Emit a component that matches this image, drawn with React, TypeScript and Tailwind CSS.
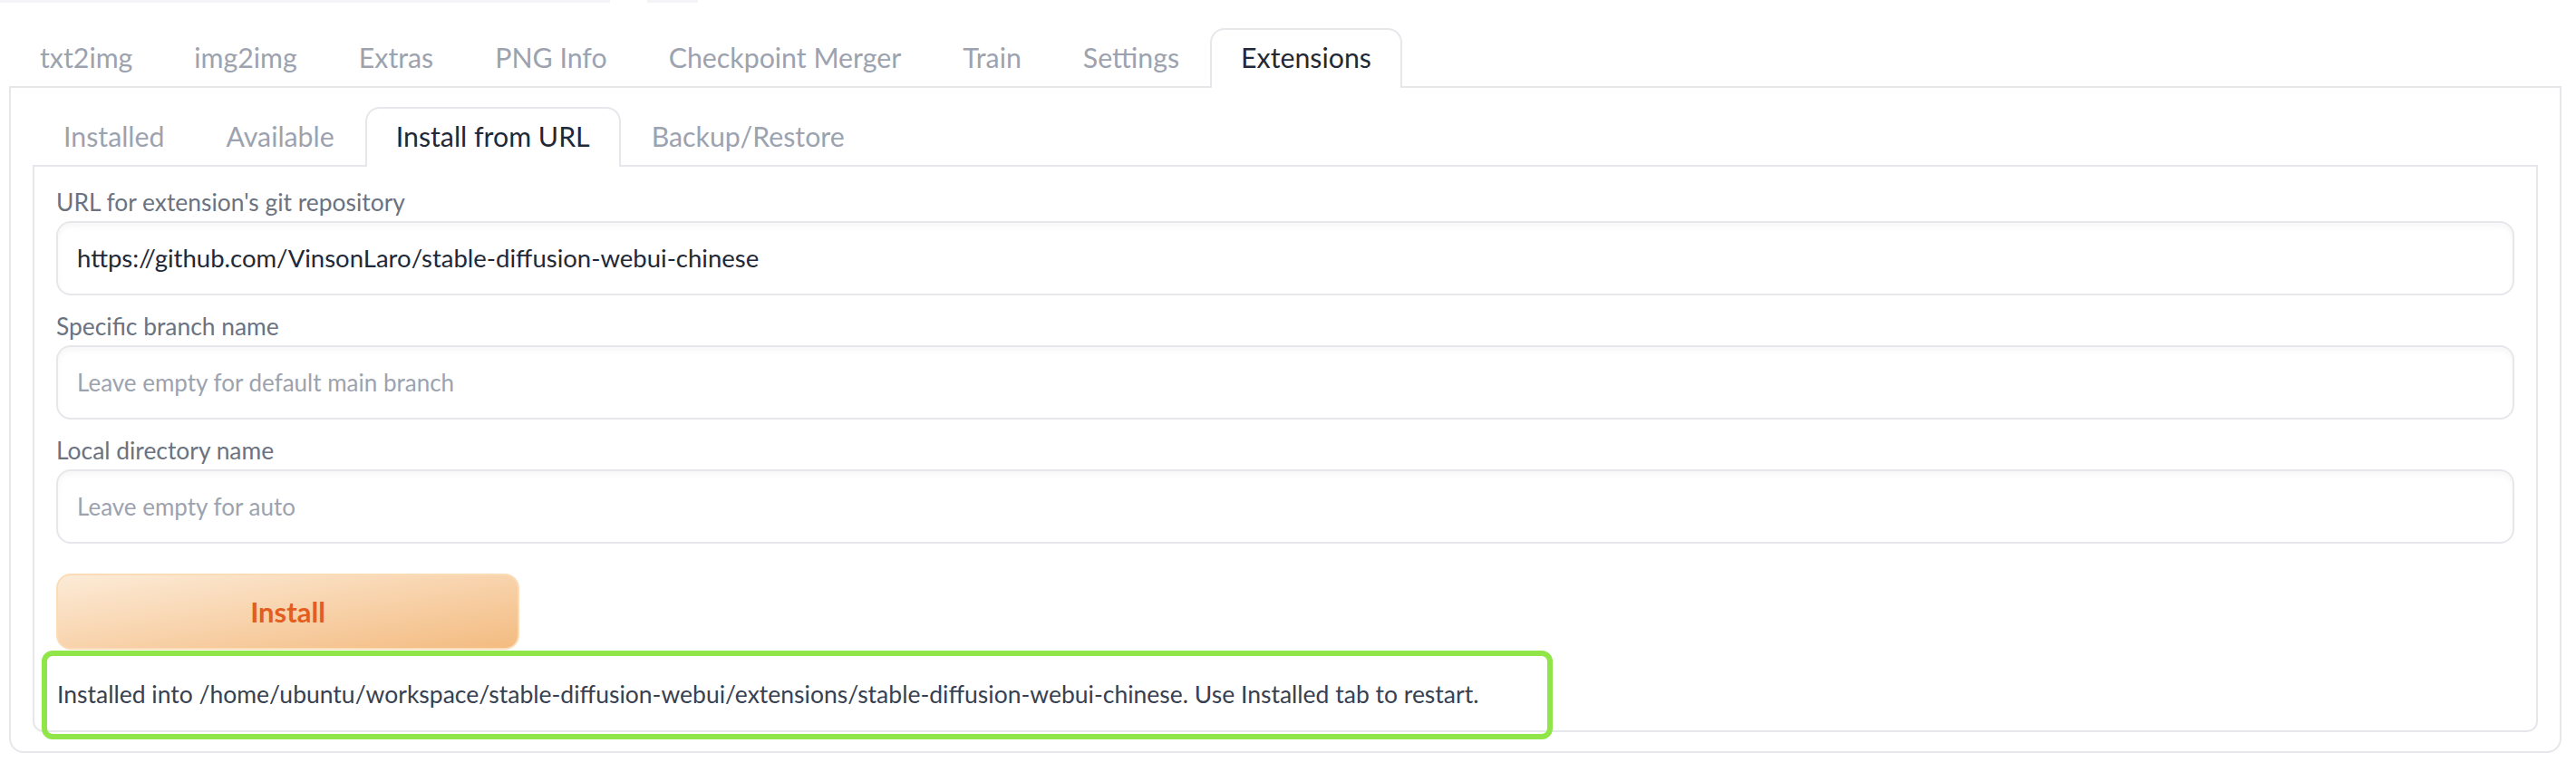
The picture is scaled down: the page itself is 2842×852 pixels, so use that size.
import React from 'react';

const topTabs = ['txt2img', 'img2img', 'Extras', 'PNG Info', 'Checkpoint Merger', 'Train', 'Settings', 'Extensions'];
const subTabs = ['Installed', 'Available', 'Install from URL', 'Backup/Restore'];

function TabNav({ tabs, active }: { tabs: string[]; active: string }) {
  return (
    <div className="flex border-b-2 border-[#e5e7eb]">
      {tabs.map((tab) => (
        <div
          key={tab}
          className={
            tab === active
              ? '-mb-[2px] flex h-[66px] items-center rounded-t-2xl border-2 border-b-0 border-[#e5e7eb] bg-white px-[32px] pb-[2px] text-[30.3px] text-[#1f2937]'
              : '-mb-[2px] flex h-[66px] items-center border-2 border-b-0 border-transparent px-[32px] pb-[2px] text-[30.3px] text-[#9ca3af]'
          }
        >
          {tab}
        </div>
      ))}
    </div>
  );
}

function Field({ label, value, placeholder }: { label: string; value?: string; placeholder?: string }) {
  return (
    <div className="flex flex-col">
      <span className="mb-[3px] h-[36px] text-[26.4px] leading-[36px] text-[#6b7280]">{label}</span>
      <div className="flex h-[82px] items-center rounded-2xl border-2 border-[#e5e7eb] bg-white px-[21px] shadow-[inset_0_4px_6px_rgba(0,0,0,0.035)]">
        {value ? (
          <span className="text-[27.5px] text-[#1f2937]">{value}</span>
        ) : (
          <span className="text-[26px] text-[#9ca3af]">{placeholder}</span>
        )}
      </div>
    </div>
  );
}

export default function App() {
  return (
    <div className="min-h-[852px] w-[2842px] bg-white font-[Lato,sans-serif]">
      <div className="flex h-[31px] items-start">
        <div className="h-[3px] w-[673px] bg-[#f4f4f6]" />
        <div className="ml-[41px] h-[3px] w-[56px] bg-[#f4f4f6]" />
      </div>
      <div className="pl-[10px] pr-[16px]">
        <TabNav tabs={topTabs} active="Extensions" />
        <div className="rounded-b-2xl border-2 border-t-0 border-[#e5e7eb] px-[24px] pb-[21px] pt-[21px]">
          <TabNav tabs={subTabs} active="Install from URL" />
          <div className="rounded-b-xl border-2 border-t-0 border-[#e5e7eb] px-[24px] pt-[21px]">
            <div className="flex flex-col gap-[16px]">
              <Field label="URL for extension's git repository" value="https://github.com/VinsonLaro/stable-diffusion-webui-chinese" />
              <Field label="Specific branch name" placeholder="Leave empty for default main branch" />
              <Field label="Local directory name" placeholder="Leave empty for auto" />
            </div>
            <button className="mt-[33px] flex h-[84px] w-[511px] items-center justify-center rounded-2xl border-2 border-[#fbdcb8] bg-gradient-to-br from-[#fcebd7] to-[#f3bb80] text-[31px] font-bold text-[#e35d1e]">
              Install
            </button>
            <div className="relative -mb-[10px] -ml-[16px] mt-[1px] flex h-[98px] w-[1667px] items-center rounded-[12px] border-[6px] border-[#90e549] pl-[11px] text-[26.5px] text-[#374151]">
              Installed into /home/ubuntu/workspace/stable-diffusion-webui/extensions/stable-diffusion-webui-chinese. Use Installed tab to restart.
            </div>
          </div>
        </div>
      </div>
    </div>
  );
}
